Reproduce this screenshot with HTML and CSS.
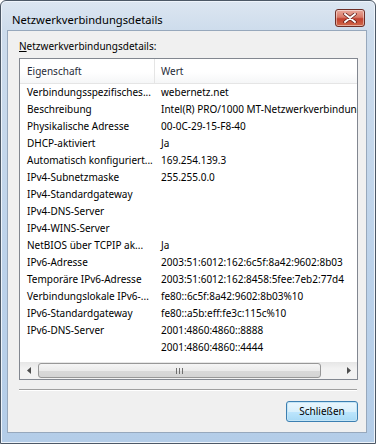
FILE: index.html
```html
<!DOCTYPE html>
<html lang="de">
  <head>
    <meta charset="UTF-8" />
    <title>Netzwerkverbindungsdetails</title>
    <link rel="stylesheet" href="styles.css">
  </head>
  <body>
    <div class="window">
      <div class="titlebar">
        <span class="title">Netzwerkverbindungsdetails</span>
        <div class="close">
          <svg width="14" height="10" viewBox="0 0 14 10">
            <path d="M2 1 L12 9 M12 1 L2 9" stroke="#5a1a14" stroke-width="3.4" stroke-linecap="round" />
            <path d="M2 1 L12 9 M12 1 L2 9" stroke="#fff" stroke-width="2" stroke-linecap="round" />
          </svg>
        </div>
      </div>
      <div class="client">
        <div class="caption"><u>N</u>etzwerkverbindungsdetails:</div>
        <div class="listbox">
          <div class="viewport">
            <div class="grid">
              <div class="head first">Eigenschaft</div>
              <div class="head">Wert</div>

              <div class="cell">Verbindungsspezifisches...</div><div class="cell">webernetz.net</div>
              <div class="cell">Beschreibung</div><div class="cell">Intel(R) PRO/1000 MT-Netzwerkverbindung</div>
              <div class="cell">Physikalische Adresse</div><div class="cell">00-0C-29-15-F8-40</div>
              <div class="cell">DHCP-aktiviert</div><div class="cell">Ja</div>
              <div class="cell">Automatisch konfiguriert...</div><div class="cell">169.254.139.3</div>
              <div class="cell">IPv4-Subnetzmaske</div><div class="cell">255.255.0.0</div>
              <div class="cell">IPv4-Standardgateway</div><div class="cell"></div>
              <div class="cell">IPv4-DNS-Server</div><div class="cell"></div>
              <div class="cell">IPv4-WINS-Server</div><div class="cell"></div>
              <div class="cell">NetBIOS über TCPIP ak...</div><div class="cell">Ja</div>
              <div class="cell">IPv6-Adresse</div><div class="cell">2003:51:6012:162:6c5f:8a42:9602:8b03</div>
              <div class="cell">Temporäre IPv6-Adresse</div><div class="cell">2003:51:6012:162:8458:5fee:7eb2:77d4</div>
              <div class="cell">Verbindungslokale IPv6-...</div><div class="cell">fe80::6c5f:8a42:9602:8b03%10</div>
              <div class="cell">IPv6-Standardgateway</div><div class="cell">fe80::a5b:eff:fe3c:115c%10</div>
              <div class="cell">IPv6-DNS-Server</div><div class="cell">2001:4860:4860::8888</div>
              <div class="cell"></div><div class="cell">2001:4860:4860::4444</div>
            </div>
          </div>
          <div class="hscroll">
            <div class="arrow">
              <svg width="4" height="7" viewBox="0 0 4 7"><path d="M4 0 L0 3.5 L4 7 Z" fill="#4d4d4d" /></svg>
            </div>
            <div class="track">
              <div class="thumb">
                <svg width="7" height="6" viewBox="0 0 7 6">
                  <path d="M0.5 0 V6 M3.5 0 V6 M6.5 0 V6" stroke="#6f6f6f" stroke-width="1" />
                </svg>
              </div>
            </div>
            <div class="arrow">
              <svg width="4" height="7" viewBox="0 0 4 7"><path d="M0 0 L4 3.5 L0 7 Z" fill="#4d4d4d" /></svg>
            </div>
          </div>
        </div>
        <div class="separator"></div>
        <div class="buttons">
          <div class="button">Schließen</div>
        </div>
      </div>
    </div>
  </body>
</html>
```
FILE: styles.css
```css
body {
  margin: 0;
  font-family: 'Noto Sans', 'Open Sans', sans-serif;
  font-size: 10px;
  color: #000;
  background: #fff;
}

.window {
  box-sizing: border-box;
  width: 376px;
  height: 444px;
  border: 1px solid #4c5866;
  border-radius: 6px 6px 0 0;
  background: linear-gradient(to bottom, #dce6f1 0, #cddcec 30px, #bcd2ea 60%, #b4cde8 100%);
  box-shadow: inset 0 0 0 1px #eef4fb;
  display: flex;
  flex-direction: column;
}

.titlebar {
  height: 29px;
  display: flex;
  align-items: flex-start;
  justify-content: space-between;
  padding: 0 10px 0 11px;
}

.title {
  font-size: 11.2px;
  margin-top: 11px;
  line-height: 15px;
}

.close {
  box-sizing: border-box;
  width: 30px;
  height: 18px;
  margin-top: 8px;
  border: 1px solid #6e2e26;
  border-radius: 3px;
  background: linear-gradient(to bottom, #e9a99b 0, #d87a68 45%, #c2412f 55%, #d06a4c 100%);
  box-shadow: inset 0 0 0 1px rgba(255, 255, 255, 0.45);
  display: flex;
  align-items: center;
  justify-content: center;
}

.client {
  box-sizing: border-box;
  flex: 1;
  margin: 0 8px 10px 6px;
  border: 1px solid #97a8bc;
  background: #f0f0f0;
  padding: 9px 0 0 11px;
}

.caption {
  line-height: 13px;
  margin-bottom: 5px;
}

.listbox {
  box-sizing: border-box;
  width: 339px;
  height: 322px;
  border: 1px solid #828790;
  background: #fff;
  display: flex;
  flex-direction: column;
}

.viewport {
  flex: 1;
  overflow: hidden;
}

.grid {
  display: grid;
  grid-template-columns: 135px 320px;
  grid-auto-rows: 17px;
}

.head {
  height: 25px;
  line-height: 25px;
  padding-left: 6px;
  color: #1f2a36;
  background: linear-gradient(to bottom, #fff 0, #fff 55%, #f5f6f7 100%);
  border-bottom: 1px solid #e5e5e5;
  box-sizing: border-box;
  margin-bottom: -8px;
}

.head.first {
  padding-left: 7px;
  border-right: 1px solid #e5e5e5;
}

.grid > .head {
  grid-row: 1;
  align-self: start;
}

.grid {
  grid-template-rows: 25px;
}

.cell {
  padding-left: 7px;
  line-height: 17px;
  white-space: nowrap;
  overflow: hidden;
}

.cell:nth-child(even) {
  padding-left: 6px;
}

.hscroll {
  height: 17px;
  display: flex;
  background: linear-gradient(to bottom, #e6e6e6, #f2f2f2 40%, #f2f2f2);
}

.arrow {
  width: 17px;
  display: flex;
  align-items: center;
  justify-content: center;
}

.track {
  flex: 1;
  padding: 1px 19px 1px 1px;
  display: flex;
}

.thumb {
  box-sizing: border-box;
  flex: 1;
  border: 1px solid #979797;
  border-radius: 3px;
  background: linear-gradient(to bottom, #f5f5f5, #ebebeb 50%, #d9d9d9 51%, #d4d4d4);
  display: flex;
  align-items: center;
  justify-content: center;
}

.separator {
  width: 338px;
  height: 1px;
  margin-top: 9px;
  background: #a0a0a0;
  border-bottom: 1px solid #fff;
}

.buttons {
  width: 339px;
  display: flex;
  justify-content: flex-end;
  margin-top: 10px;
}

.button {
  box-sizing: border-box;
  width: 72px;
  height: 21px;
  line-height: 19px;
  text-align: center;
  border: 1px solid #3c7fb1;
  border-radius: 3px;
  background: linear-gradient(to bottom, #eaf6fd 0, #d9f0fc 50%, #bee6fd 51%, #a7d9f5 100%);
  box-shadow: inset 0 0 0 1px #c4e5f6;
}
```
